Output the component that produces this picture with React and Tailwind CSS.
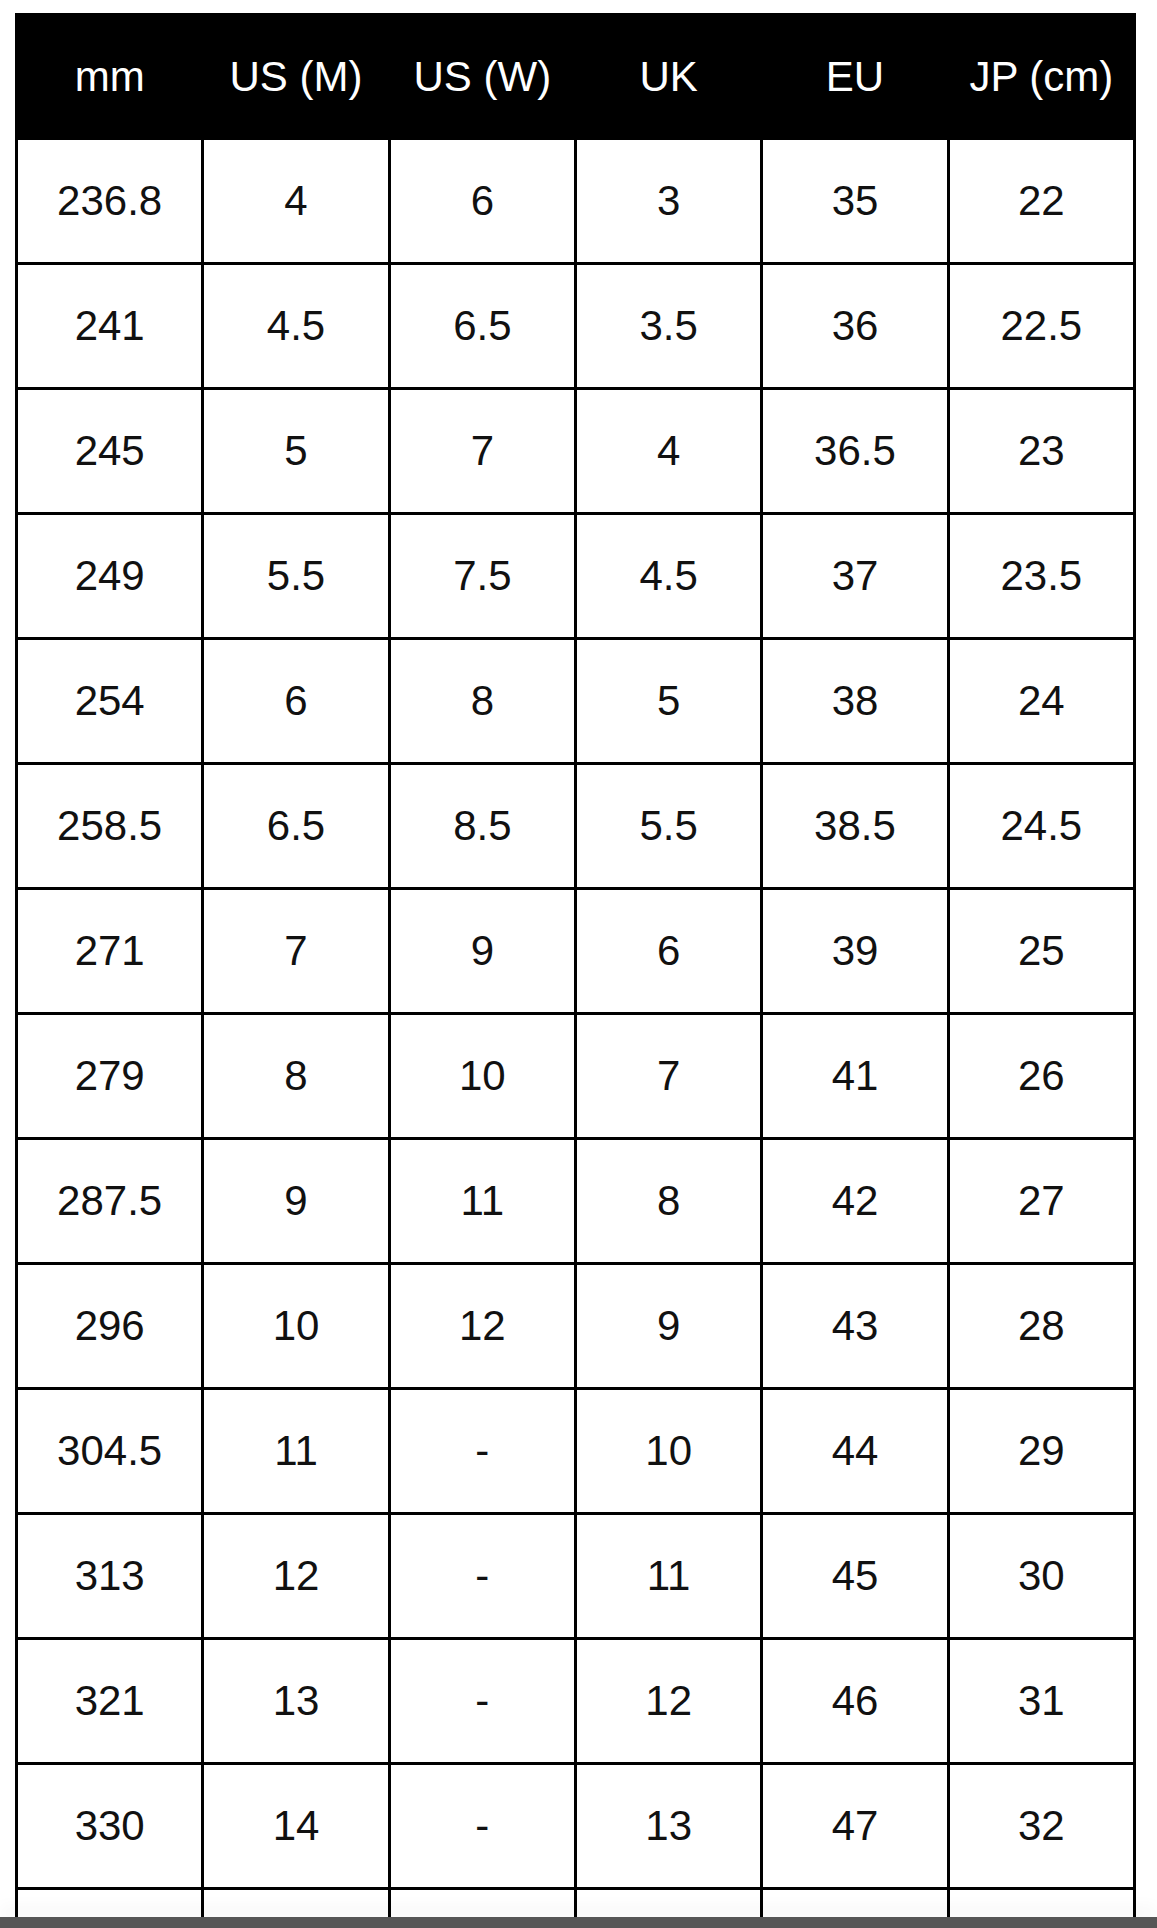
const headers = ['mm', 'US (M)', 'US (W)', 'UK', 'EU', 'JP (cm)']

const rows = [
  ['236.8', '4', '6', '3', '35', '22'],
  ['241', '4.5', '6.5', '3.5', '36', '22.5'],
  ['245', '5', '7', '4', '36.5', '23'],
  ['249', '5.5', '7.5', '4.5', '37', '23.5'],
  ['254', '6', '8', '5', '38', '24'],
  ['258.5', '6.5', '8.5', '5.5', '38.5', '24.5'],
  ['271', '7', '9', '6', '39', '25'],
  ['279', '8', '10', '7', '41', '26'],
  ['287.5', '9', '11', '8', '42', '27'],
  ['296', '10', '12', '9', '43', '28'],
  ['304.5', '11', '-', '10', '44', '29'],
  ['313', '12', '-', '11', '45', '30'],
  ['321', '13', '-', '12', '46', '31'],
  ['330', '14', '-', '13', '47', '32'],
  ['', '', '', '', '', ''],
]

export default function App() {
  return (
    <div className="flex h-[1928px] w-[1157px] flex-col overflow-hidden bg-white font-['Liberation_Sans',Arial,sans-serif]">
      <div className="min-h-0 flex-1 overflow-hidden pl-[15px] pt-[13px]">
        {/* size chart */}
        <div className="grid w-[1121px] grid-cols-6 gap-[3px] border-[3px] border-black bg-black text-[42px] leading-none">
          {headers.map((h) => (
            <div
              key={h}
              className="flex h-[121px] items-center justify-center bg-black text-white"
            >
              {h}
            </div>
          ))}
          {rows.map((row, i) =>
            row.map((cell, j) => (
              <div
                key={i + '-' + j}
                className="flex h-[122px] items-center justify-center bg-white text-[#111]"
              >
                {cell}
              </div>
            ))
          )}
        </div>
      </div>
      <div className="h-[11px] shrink-0 bg-[#565656] shadow-[0_-10px_16px_rgba(0,0,0,0.04)]"></div>
    </div>
  )
}
